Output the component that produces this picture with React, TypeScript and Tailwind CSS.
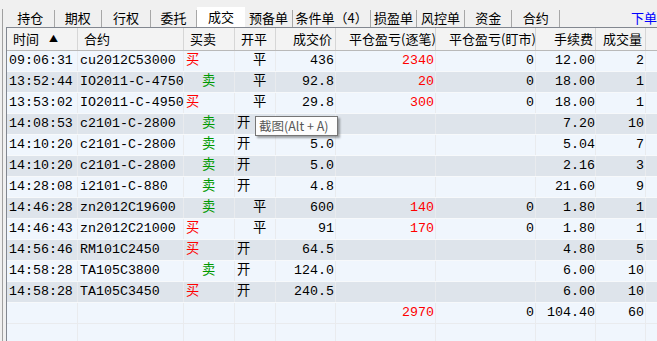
import React from "react";

type Row = {
  time: string;
  code: string;
  side: "买" | "卖";
  oc: "开" | "平";
  price: string;
  pnl: string;
  mkt: string;
  fee: string;
  qty: string;
};

// row 4 price sits under the screenshot tooltip, so it is left blank
const rows: Row[] = [
  { time: "09:06:31", code: "cu2012C53000", side: "买", oc: "平", price: "436", pnl: "2340", mkt: "0", fee: "12.00", qty: "2" },
  { time: "13:52:44", code: "IO2011-C-4750", side: "卖", oc: "平", price: "92.8", pnl: "20", mkt: "0", fee: "18.00", qty: "1" },
  { time: "13:53:02", code: "IO2011-C-4950", side: "买", oc: "平", price: "29.8", pnl: "300", mkt: "0", fee: "18.00", qty: "1" },
  { time: "14:08:53", code: "c2101-C-2800", side: "卖", oc: "开", price: "", pnl: "", mkt: "", fee: "7.20", qty: "10" },
  { time: "14:10:20", code: "c2101-C-2800", side: "卖", oc: "开", price: "5.0", pnl: "", mkt: "", fee: "5.04", qty: "7" },
  { time: "14:10:20", code: "c2101-C-2800", side: "卖", oc: "开", price: "5.0", pnl: "", mkt: "", fee: "2.16", qty: "3" },
  { time: "14:28:08", code: "i2101-C-880", side: "卖", oc: "开", price: "4.8", pnl: "", mkt: "", fee: "21.60", qty: "9" },
  { time: "14:46:28", code: "zn2012C19600", side: "卖", oc: "平", price: "600", pnl: "140", mkt: "0", fee: "1.80", qty: "1" },
  { time: "14:46:43", code: "zn2012C21000", side: "买", oc: "平", price: "91", pnl: "170", mkt: "0", fee: "1.80", qty: "1" },
  { time: "14:56:46", code: "RM101C2450", side: "买", oc: "开", price: "64.5", pnl: "", mkt: "", fee: "4.80", qty: "5" },
  { time: "14:58:28", code: "TA105C3800", side: "卖", oc: "开", price: "124.0", pnl: "", mkt: "", fee: "6.00", qty: "10" },
  { time: "14:58:28", code: "TA105C3450", side: "买", oc: "开", price: "240.5", pnl: "", mkt: "", fee: "6.00", qty: "10" },
];

const tabs = [
  { label: "持仓", w: "w-[48px]" },
  { label: "期权", w: "w-[48px]" },
  { label: "行权", w: "w-[49px]" },
  { label: "委托", w: "w-[47px]" },
  { label: "成交", w: "w-[48px]", active: true },
  { label: "预备单", w: "w-[49px]" },
  { label: "条件单（4）", w: "w-[78px]" },
  { label: "损盈单", w: "w-[47px]" },
  { label: "风控单", w: "w-[48px]" },
  { label: "资金", w: "w-[48px]" },
  { label: "合约", w: "w-[48px]" },
];

const grid = "grid grid-cols-[71px_106px_51px_41px_60px_100px_100px_60px_50px_1fr]";
const cell = "border-r border-[#e9ebee] flex items-center whitespace-nowrap";

export default function App() {
  return (
    <div className="relative w-[657px] h-[341px] overflow-hidden bg-[#f0f0f0] flex font-['Noto_Sans_CJK_SC',sans-serif]">
      {/* left frame strip */}
      <div className="w-[6px] shrink-0 pt-[9px] pl-[2px]">
        <div className="h-full border-l border-[#a0a0a0]" />
      </div>

      <div className="flex-1 flex flex-col min-w-0">
        {/* tab bar */}
        <div className="h-[27px] flex items-end shrink-0 text-[13px] text-black">
          <div className="w-[1px]" />
          {tabs.map((t) =>
            t.active ? (
              <div key={t.label} className={`${t.w} h-[20px] bg-white flex items-center justify-center`}>
                {t.label}
              </div>
            ) : (
              <div key={t.label} className={`${t.w} h-[17px] flex items-center justify-center border-r border-[#a7a7a7] whitespace-nowrap`}>
                <span className="-mt-[2px]">{t.label}</span>
              </div>
            )
          )}
          <div className="ml-[71px] h-[17px] flex items-center text-[#0000ff] whitespace-nowrap">
            <span className="-mt-[2px]">下单</span>
          </div>
        </div>

        {/* table */}
        <div className="flex-1 border-l border-t border-[#828790] bg-[#f0f6fd] flex flex-col">
          {/* header */}
          <div className={`${grid} h-[23px] bg-[#f3f3f3] border-b border-[#b9b9b9] text-[13px] text-black`}>
            <div className="border-r border-[#d6d6d6] flex items-center pl-[6px] gap-[10px]">
              <span>时间</span>
              <span className="text-[9px]">▲</span>
            </div>
            <div className="border-r border-[#d6d6d6] flex items-center pl-[6px]">合约</div>
            <div className="border-r border-[#d6d6d6] flex items-center pl-[6px]">买卖</div>
            <div className="border-r border-[#d6d6d6] flex items-center pl-[6px]">开平</div>
            <div className="border-r border-[#d6d6d6] flex items-center pl-[17px]">成交价</div>
            <div className="border-r border-[#d6d6d6] flex items-center pl-[13px] whitespace-nowrap">平仓盈亏(逐笔)</div>
            <div className="border-r border-[#d6d6d6] flex items-center pl-[13px] whitespace-nowrap">平仓盈亏(盯市)</div>
            <div className="border-r border-[#d6d6d6] flex items-center pl-[18px]">手续费</div>
            <div className="border-r border-[#d6d6d6] flex items-center pl-[7px]">成交量</div>
            <div />
          </div>

          {/* rows */}
          <div className="font-['Liberation_Mono','Noto_Sans_CJK_SC',monospace] text-[13.3px] text-black">
            {rows.map((r, i) => (
              <div
                key={i}
                className={`${grid} h-[21px] border-b border-[#f7f9fb] ${i % 2 === 1 ? "bg-[#dee4eb]" : "bg-[#f0f6fd]"}`}
              >
                <div className={`${cell} pl-[2px]`}>{r.time}</div>
                <div className={`${cell} pl-[2px] overflow-visible`}>{r.code}</div>
                <div className={`${cell} ${r.side === "买" ? "pl-[2px] text-[#ff0000]" : "pl-[18px] text-[#009900]"}`}>{r.side}</div>
                <div className={`${cell} ${r.oc === "开" ? "pl-[2px]" : "pl-[18px]"}`}>{r.oc}</div>
                <div className={`${cell} justify-end pr-[1px]`}>{r.price}</div>
                <div className={`${cell} justify-end pr-[1px] text-[#ff0000]`}>{r.pnl}</div>
                <div className={`${cell} justify-end pr-[1px]`}>{r.mkt}</div>
                <div className={`${cell} justify-end pr-[0px]`}>{r.fee}</div>
                <div className={`${cell} justify-end pr-[1px]`}>{r.qty}</div>
                <div />
              </div>
            ))}
            {/* total row */}
            <div className={`${grid} h-[21px] border-b border-[#e9ebee] bg-[#f0f6fd]`}>
              <div className={cell} />
              <div className={cell} />
              <div className={cell} />
              <div className={cell} />
              <div className={cell} />
              <div className={`${cell} justify-end pr-[1px] text-[#ff0000]`}>2970</div>
              <div className={`${cell} justify-end pr-[1px]`}>0</div>
              <div className={`${cell} justify-end pr-[0px]`}>104.40</div>
              <div className={`${cell} justify-end pr-[1px]`}>60</div>
              <div />
            </div>
            {/* empty row */}
            <div className={`${grid} h-[21px] bg-[#f0f6fd]`}>
              <div className={cell} />
              <div className={cell} />
              <div className={cell} />
              <div className={cell} />
              <div className={cell} />
              <div className={cell} />
              <div className={cell} />
              <div className={cell} />
              <div className={cell} />
              <div />
            </div>
          </div>
        </div>
      </div>

      {/* screenshot tooltip */}
      <div className="absolute left-[255px] top-[116px] w-[83px] h-[20px] pl-[3px] flex items-center bg-[#fdfdfd] border border-[#767676] shadow-[2px_2px_2px_rgba(0,0,0,0.35)] text-[12.5px] text-[#575757] whitespace-nowrap font-['Noto_Sans_CJK_SC',sans-serif]">
        截图(Alt + A)
      </div>
    </div>
  );
}
